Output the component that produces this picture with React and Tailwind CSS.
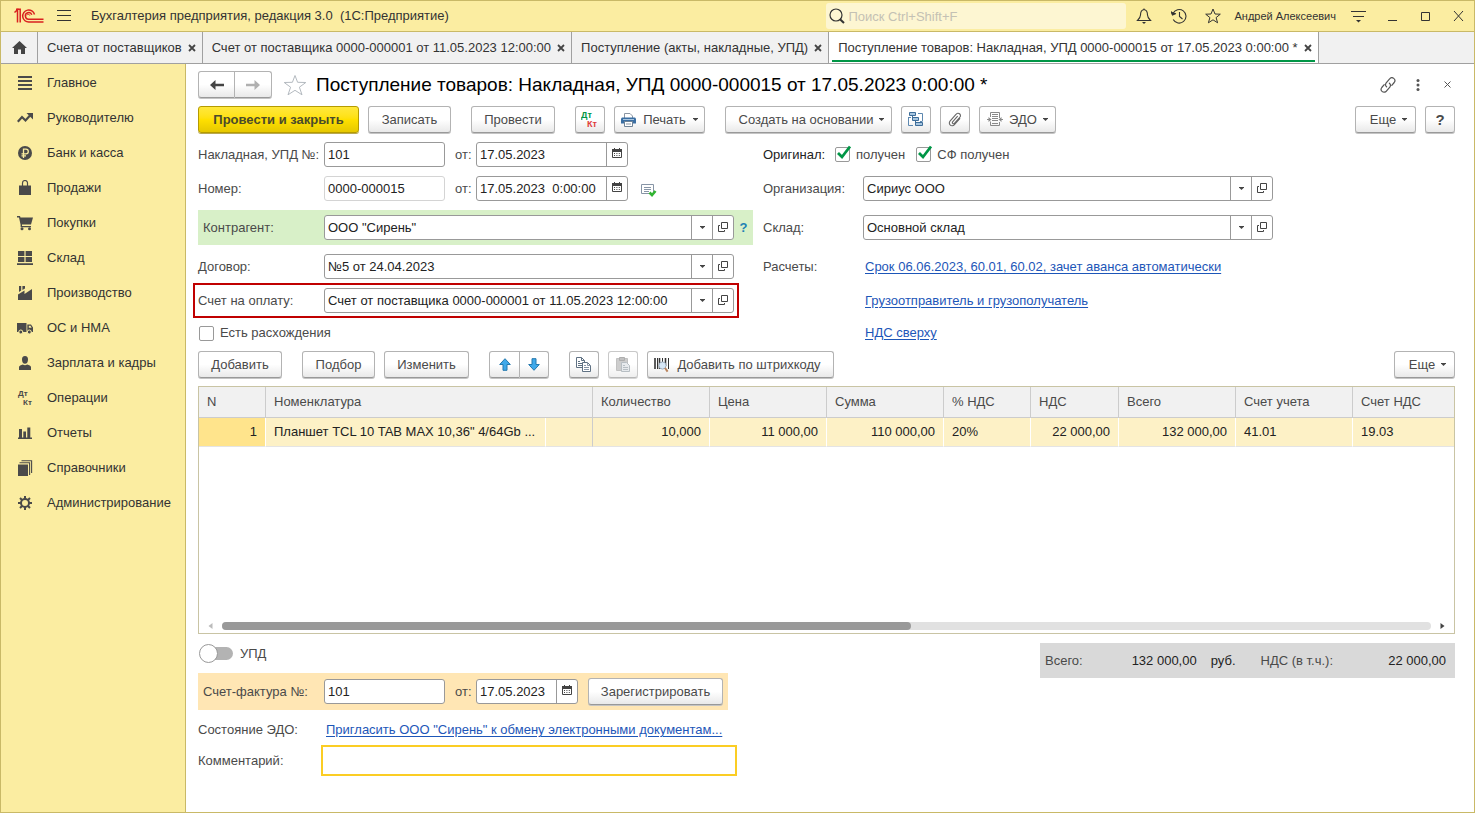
import React, { useState } from 'react';

const BTN =
  'flex h-[27px] shrink-0 items-center justify-center rounded-[3px] border border-[#b3b3b3] border-b-[#999] bg-linear-to-b from-white from-50% to-[#e9e9e9] text-[#4a4a4a] shadow-[0_1px_0_#c4c4c4]';

const LINK = 'text-[#1d56b8] underline underline-offset-2';

/* ---------- icons ---------- */

const Logo = () => (
  <svg width="30" height="16" viewBox="0 0 30 16" fill="none" stroke="#d9201f" strokeWidth="1.5">
    <path d="M0.5 4.5 L3.5 1.8 V14.5" />
    <path d="M2 1.2 H6.2 V14.5" />
    <path d="M20.5 6.5 A6 6 0 1 0 15.2 14 H29.5" />
    <path d="M17.8 6.8 A3.3 3.3 0 1 0 15.2 11.2 H29.5" />
    <path d="M13 7.2 A1.5 1.5 0 0 1 15.8 7.5" strokeWidth="1" />
  </svg>
);

const Caret = () => (
  <svg width="5" height="3" viewBox="0 0 5 3" className="shrink-0">
    <path d="M0 0 H5 V0.6 L2.5 3 L0 0.6 Z" fill="#444" />
  </svg>
);

const CalendarIcon = () => (
  <svg width="10" height="11" viewBox="0 0 10 11" className="mb-[2px]">
    <path d="M0.5 1.5 H9.5 V9.5 H0.5 Z" fill="#fff" stroke="#444" />
    <path d="M0 1 H10 V4 H0 Z" fill="#444" />
    <path d="M2.5 0 V2 M7.5 0 V2" stroke="#444" />
    <path d="M2 5.5 H8 M2 7.5 H8" stroke="#444" strokeDasharray="1 1.4" />
  </svg>
);

const OpenIcon = () => (
  <svg width="10" height="10" viewBox="0 0 10 10" fill="none" stroke="#444" className="mb-[2px]">
    <path d="M3.5 0.5 H9.5 V6.5 H3.5 Z" />
    <path d="M2 3.5 H0.5 V9.5 H6.5 V8" />
  </svg>
);

const TabClose = () => (
  <svg width="8" height="8" viewBox="0 0 8 8">
    <path d="M1 1 L7 7 M7 1 L1 7" stroke="#444" strokeWidth="1.8" />
  </svg>
);

const DtKt = ({ top, bottom }) => (
  <svg width="18" height="17" viewBox="0 0 18 17" fontFamily="'Liberation Sans', sans-serif" fontWeight="bold" fontSize="9">
    <text x="0" y="7" fill={top}>Дт</text>
    <text x="6" y="16" fill={bottom}>Кт</text>
  </svg>
);

const PrintIcon = () => (
  <svg width="15" height="14" viewBox="0 0 15 14">
    <path d="M3.5 5 V0.5 H9 L11.5 3 V5" fill="#fff" stroke="#8b96a3" />
    <path d="M1 4.5 H14 L15 5.5 V10.5 H0 V5.5 Z" fill="#3b6fa3" />
    <path d="M2 6.5 H13" stroke="#a9c6e0" />
    <path d="M3.5 8.5 H11.5 V13.5 H3.5 Z" fill="#fff" stroke="#6f8397" />
    <path d="M5 11 H10" stroke="#8b96a3" />
  </svg>
);

const StructureIcon = () => (
  <svg width="16" height="15" viewBox="0 0 16 15">
    <path d="M10 1.5 H14.5 V9 M0.5 5 V13.5 H5 M0.5 5.5 H3 M12 9.5 H14.5" fill="none" stroke="#5d88b0" />
    <g fill="#a8c6e0" stroke="#3d6d99">
      <path d="M1.5 0.5 H7.5 V3.5 H1.5 Z" />
      <path d="M4.5 5.5 H10.5 V8.5 H4.5 Z" />
      <path d="M7.5 10.5 H14.5 V13.5 H7.5 Z" />
    </g>
    <path d="M4.5 4 V7 M7.5 9 V12" stroke="#3d6d99" />
  </svg>
);

const ClipIcon = () => (
  <svg width="16" height="16" viewBox="0 0 16 16" fill="none" stroke="#666" strokeWidth="1.1" strokeLinecap="round">
    <path d="M12.8 6.6 L7.2 12.8 A2.7 2.7 0 0 1 3 9.2 L9.2 2.2 A2.3 2.3 0 0 1 13 5 L7.4 11.3 A1.1 1.1 0 0 1 5.6 9.8 L10.4 4.4" />
  </svg>
);

const EdoIcon = () => (
  <svg width="16" height="15" viewBox="0 0 16 15" fill="none" stroke="#8a8a8a">
    <path d="M3.5 5 V0.5 H12.5 V6 M3.5 9.5 V13.5 H12.5 V10" />
    <path d="M5 2.5 H11 M5 4.5 H11 M5 6.5 H11 M5 8.5 H11 M5 11.5 H11" />
    <path d="M0 7.5 H4 M12 7.5 H16" />
    <path d="M1.5 5 L4.5 7.5 L1.5 10 Z M14.5 5 L11.5 7.5 L14.5 10 Z" fill="#8a8a8a" stroke="none" />
  </svg>
);

const ListOkIcon = () => (
  <svg width="16" height="13" viewBox="0 0 16 13" fill="none">
    <path d="M0.5 0.5 H12.5 V9.5 H0.5 Z" stroke="#8795a6" fill="#fff" />
    <path d="M3 3.5 H10 M3 5.5 H10 M3 7.5 H8" stroke="#8795a6" />
    <path d="M8.5 8.5 L11 11 L14.5 7" stroke="#32b432" strokeWidth="2.6" />
  </svg>
);

const ArrowIcon = ({ down }) => (
  <svg width="12" height="13" viewBox="0 0 12 13" className={down ? 'rotate-180' : ''}>
    <path d="M6 0.7 L11.3 6.5 H8 V12.3 H4 V6.5 H0.7 Z" fill="#3fa9ea" stroke="#2478ad" strokeLinejoin="round" />
  </svg>
);

const CopyIcon = () => (
  <svg width="16" height="16" viewBox="0 0 16 16" fill="#fff" stroke="#5f7183">
    <path d="M0.5 0.5 H5.5 L8.5 3.5 V10.5 H0.5 Z" />
    <path d="M5.5 0.5 V3.5 H8.5 M2 4.5 H4 M2 6.5 H6 M2 8.5 H6" fill="none" />
    <path d="M6.5 5.5 H11.5 L14.5 8.5 V14.5 H6.5 Z" />
    <path d="M11.5 5.5 V8.5 H14.5 M8 8.5 H10 M8 10.5 H13 M8 12.5 H13" fill="none" stroke="#8795a6" />
  </svg>
);

const PasteIcon = () => (
  <svg width="15" height="16" viewBox="0 0 15 16">
    <path d="M0.5 1.5 H11.5 V13.5 H0.5 Z" fill="#b8b8b8" stroke="#a8a8a8" />
    <path d="M3.5 0.5 H8.5 V3.5 H3.5 Z" fill="#a8a8a8" stroke="#8c8c8c" />
    <path d="M5.5 5.5 H10.5 L13.5 8.5 V14.5 H5.5 Z" fill="#dde2e6" stroke="#9aa3ab" />
    <path d="M7 8.5 H9 M7 10.5 H12 M7 12.5 H12" stroke="#9aa3ab" />
  </svg>
);

const BarcodeIcon = () => (
  <svg width="16" height="16" viewBox="0 0 16 16">
    <path d="M1 1 V12 M5.5 1 V12 M11.5 1 V9" stroke="#333" strokeWidth="1.6" />
    <path d="M3.5 1 V12 M8.5 1 V5 M14.5 1 V12" stroke="#333" />
    <circle cx="8.5" cy="8.5" r="3.6" fill="#d6e6f5" stroke="#9aa9b8" />
    <path d="M11 11 L13.6 14.6" stroke="#b9825a" strokeWidth="2" />
  </svg>
);

const LinkIcon = () => (
  <svg width="16" height="16" viewBox="0 0 16 16" fill="none" stroke="#555" strokeWidth="1.2" strokeLinecap="round">
    <path d="M6.6 9.8 A3 3 0 0 1 6.2 5.8 L9.6 1.9 A2.9 2.9 0 0 1 14.2 5.5 L11.8 8.3" />
    <path d="M9.4 6.2 A3 3 0 0 1 9.8 10.2 L6.4 14.1 A2.9 2.9 0 0 1 1.8 10.5 L4.2 7.7" />
  </svg>
);

const MENU = [
  {
    title: 'Главное',
    icon: <path d="M1 1 H15 V3 H1 Z M1 5 H15 V7 H1 Z M1 9 H15 V11 H1 Z M1 13 H15 V15 H1 Z" />,
  },
  {
    title: 'Руководителю',
    icon: (
      <>
        <path d="M0.8 11.8 L5 7 L8.5 10.5 L13 5.5" fill="none" stroke="#4a4a4a" strokeWidth="2.2" />
        <path d="M9.5 3 H16 V9.5 Z" />
      </>
    ),
  },
  {
    title: 'Банк и касса',
    icon: (
      <>
        <circle cx="8" cy="8" r="7" />
        <path d="M6.5 13 V4.2 H9 A2.3 2.3 0 0 1 9 8.8 H4.5 M4.5 10.8 H9" fill="none" stroke="#fbeda1" strokeWidth="1.3" />
      </>
    ),
  },
  {
    title: 'Продажи',
    icon: (
      <>
        <path d="M2 5.5 H14 V15 H2 Z" />
        <path d="M5.5 7.5 V3 A2.5 2.5 0 0 1 10.5 3 V7.5" fill="none" stroke="#4a4a4a" strokeWidth="1.2" />
      </>
    ),
  },
  {
    title: 'Покупки',
    icon: (
      <>
        <path d="M0 1 H3 L3.5 2.5 H16 L14 9.5 H5 V11 H14 V12.2 H3.6 V9.8 L2 2.4 H0 Z" />
        <circle cx="5" cy="13.8" r="1.5" />
        <circle cx="12.5" cy="13.8" r="1.5" />
      </>
    ),
  },
  {
    title: 'Склад',
    icon: <path d="M1 1 H7.4 V6 H1 Z M8.6 1 H15 V6 H8.6 Z M1 7 H7.4 V12 H1 Z M8.6 7 H15 V12 H8.6 Z M0 13.2 H16 V15 H0 Z" />,
  },
  {
    title: 'Производство',
    icon: <path d="M1 15 V9.5 L7.5 5.5 V9 L15 4 V15 Z M2 1 H4.2 V5.6 L2 7 Z M5.4 1 H8 V3.6 L5.4 5 Z" />,
  },
  {
    title: 'ОС и НМА',
    icon: (
      <>
        <path d="M0 3 H9.5 V12 H0 Z M10.3 4.5 H14 L16 7.5 V12 H10.3 Z" />
        <path d="M11.8 5.8 H13.5 L14.6 7.8 H11.8 Z" fill="#fbeda1" />
        <circle cx="3.8" cy="12" r="2" stroke="#fbeda1" />
        <circle cx="12.3" cy="12" r="2" stroke="#fbeda1" />
      </>
    ),
  },
  {
    title: 'Зарплата и кадры',
    icon: <path d="M8 1 C10.2 1 11 2.4 11 4.4 C11 7 9.8 8.8 8 8.8 C6.2 8.8 5 7 5 4.4 C5 2.4 5.8 1 8 1 Z M2 15 V12 C2 10.6 4 9.8 5.8 9.4 Q8 11 10.2 9.4 C12 9.8 14 10.6 14 12 V15 Z" />,
  },
  {
    title: 'Операции',
    icon: (
      <g fontFamily="'Liberation Sans', sans-serif" fontWeight="bold" fontSize="8">
        <text x="1" y="6">Дт</text>
        <text x="6" y="15">Кт</text>
      </g>
    ),
  },
  {
    title: 'Отчеты',
    icon: <path d="M2 4 H5 V12.5 H2 Z M6.3 6.5 H9 V12.5 H6.3 Z M10.3 2.5 H13.3 V12.5 H10.3 Z M1 12.5 H15 V14 H1 Z" />,
  },
  {
    title: 'Справочники',
    icon: (
      <>
        <path d="M1 4.5 H11 V16 H1 Z" />
        <path d="M2.5 2.8 H12.6 V15 M4.5 0.8 H14.6 V13" fill="none" stroke="#4a4a4a" strokeWidth="1.1" />
      </>
    ),
  },
  {
    title: 'Администрирование',
    icon: (
      <>
        <circle cx="8" cy="8" r="4" fill="none" stroke="#4a4a4a" strokeWidth="2" />
        <path
          d="M8 1 V4 M8 12 V15 M1 8 H4 M12 8 H15 M3 3 L5 5 M11 11 L13 13 M3 13 L5 11 M11 5 L13 3"
          stroke="#4a4a4a"
          strokeWidth="2"
        />
      </>
    ),
  },
];

const TABS = [
  { title: 'Счета от поставщиков' },
  { title: 'Счет от поставщика 0000-000001 от 11.05.2023 12:00:00' },
  { title: 'Поступление (акты, накладные, УПД)' },
  { title: 'Поступление товаров: Накладная, УПД 0000-000015 от 17.05.2023 0:00:00 *', active: true },
];

/* ---------- controls ---------- */

const Button = ({ className = '', children, ...rest }) => (
  <button type="button" className={`${BTN} ${className}`} {...rest}>
    {children}
  </button>
);

const Field = ({ id, value, className = '', muted, children, ...rest }) => (
  <div
    className={`flex h-[25px] overflow-hidden rounded-[3px] border bg-white ${muted ? 'border-[#d4d4d4]' : 'border-[#999]'} ${className}`}
  >
    <input id={id} type="text" defaultValue={value} className="min-w-0 flex-1 px-[3px] text-[#222] outline-none" {...rest} />
    {children}
  </div>
);

const FieldButton = ({ label, children }) => (
  <button type="button" aria-label={label} className="flex w-[21px] shrink-0 items-center justify-center border-l border-[#999]">
    {children}
  </button>
);

const DateField = ({ id, value, className }) => (
  <Field id={id} value={value} className={className}>
    <FieldButton label="Выбрать дату">
      <CalendarIcon />
    </FieldButton>
  </Field>
);

const Combo = ({ id, value, className = '' }) => (
  <Field id={id} value={value} className={`min-w-0 flex-1 ${className}`}>
    <FieldButton label="Выбрать">
      <Caret />
    </FieldButton>
    <FieldButton label="Открыть">
      <OpenIcon />
    </FieldButton>
  </Field>
);

const Checkbox = ({ id, label, defaultChecked = false }) => {
  const [checked, setChecked] = useState(defaultChecked);
  return (
    <label htmlFor={id} className="flex items-center gap-[6px]">
      <span className="relative flex">
        <input
          id={id}
          type="checkbox"
          checked={checked}
          onChange={(e) => setChecked(e.target.checked)}
          className="size-[15px] appearance-none rounded-[2px] border border-[#999] bg-white"
        />
        {checked && (
          <svg width="16" height="16" viewBox="0 0 16 16" className="pointer-events-none absolute bottom-[2px] left-px">
            <path d="M2 9 L6 13 L14 2.5" fill="none" stroke="#009646" strokeWidth="2.8" />
          </svg>
        )}
      </span>
      {label}
    </label>
  );
};

const TitleBar = () => (
  <header className="flex h-[31px] shrink-0 items-center border-b border-[#c9b967] bg-[#fbeda1] pl-[13px] text-[#333]">
    <Logo />
    <button type="button" aria-label="Меню" className="ml-[13px]">
      <svg width="14" height="12" viewBox="0 0 14 12" stroke="#333">
        <path d="M0 0.5 H14 M0 5.5 H14 M0 10.5 H14" />
      </svg>
    </button>
    <h1 className="ml-5 flex-1 whitespace-pre">Бухгалтерия предприятия, редакция 3.0  (1С:Предприятие)</h1>
    <div className="relative flex w-[300px] items-center">
      <svg width="16" height="16" viewBox="0 0 16 16" className="absolute left-[3px]" fill="none" stroke="#333">
        <circle cx="7" cy="7" r="6" strokeWidth="1.2" />
        <path d="M11 11.2 L15 15" strokeWidth="2" />
      </svg>
      <input
        type="search"
        aria-label="Поиск"
        placeholder="Поиск Ctrl+Shift+F"
        className="h-[26px] w-full rounded-[3px] bg-[#fdf6d2] pl-[22px] placeholder:text-[#c4c1b4]"
      />
    </div>
    <div className="ml-[9px] flex items-center gap-[18px]">
      <button type="button" aria-label="Уведомления">
        <svg width="16" height="16" viewBox="0 0 16 16" fill="none" stroke="#333" className="mx-px">
          <path d="M8 1.5 C5 2 4.5 4.5 4.5 7 C4.5 9.5 3 11 1.5 12.5 H14.5 C13 11 11.5 9.5 11.5 7 C11.5 4.5 11 2 8 1.5 Z M8 0.5 V2" strokeWidth="1.1" />
          <path d="M6 14 H10 L8 16 Z" fill="#333" stroke="none" />
        </svg>
      </button>
      <button type="button" aria-label="История">
        <svg width="16" height="16" viewBox="0 0 16 16" fill="none" stroke="#333" strokeWidth="1.1">
          <path d="M2 5.5 A6.8 6.8 0 1 1 2.2 11.5 M8.5 4 V8.5 L11.5 11" />
          <path d="M0 3.5 L1.5 7 L5 5.5" fill="#333" />
        </svg>
      </button>
      <button type="button" aria-label="Избранное">
        <svg width="16" height="16" viewBox="0 0 16 16" fill="none" stroke="#333">
          <path d="M8 1 L10 6 L15.3 6.2 L11.1 9.6 L12.6 14.8 L8 11.8 L3.4 14.8 L4.9 9.6 L0.7 6.2 L6 6 Z" />
        </svg>
      </button>
    </div>
    <span className="ml-[13px] text-[11px]">Андрей Алексеевич</span>
    <div className="ml-[15px] mr-[9px] flex items-center gap-[20px]">
      <button type="button" aria-label="Настройки">
        <svg width="15" height="14" viewBox="0 0 15 14" stroke="#333">
          <path d="M0 2.5 H15 M2 7.5 H13" />
          <path d="M5 11 H10 L7.5 13.5 Z" fill="#333" stroke="none" />
        </svg>
      </button>
      <button type="button" aria-label="Свернуть">
        <svg width="13" height="12" viewBox="0 0 13 12" stroke="#333">
          <path d="M2 10.5 H11" />
        </svg>
      </button>
      <button type="button" aria-label="Развернуть">
        <svg width="13" height="12" viewBox="0 0 13 12" stroke="#333" fill="none">
          <path d="M2.5 2.5 H10.5 V10.5 H2.5 Z" />
        </svg>
      </button>
      <button type="button" aria-label="Закрыть">
        <svg width="13" height="12" viewBox="0 0 13 12" stroke="#333">
          <path d="M2 1 L11 11 M11 1 L2 11" />
        </svg>
      </button>
    </div>
  </header>
);

const TabBar = () => (
  <nav className="flex h-[32px] shrink-0 border-b border-[#a0a0a0] bg-[#f1f1f1] text-[#333]">
    <button type="button" aria-label="Начальная страница" className="flex w-[37px] items-center justify-center border-r border-[#a0a0a0]">
      <svg width="15" height="13" viewBox="0 0 15 13">
        <path d="M7.5 0 L15 7 H13 V13 H9 V8.5 H6 V13 H2 V7 H0 Z" fill="#444" />
      </svg>
    </button>
    {TABS.map((tab) => (
      <div
        key={tab.title}
        className={`relative flex items-center gap-[6px] border-r border-[#a0a0a0] pl-[9px] pr-[6px] ${tab.active ? 'bg-white' : ''}`}
      >
        <a href="#" className="whitespace-nowrap">{tab.title}</a>
        <button type="button" aria-label="Закрыть вкладку">
          <TabClose />
        </button>
        {tab.active && <span className="absolute inset-x-[3px] bottom-px h-[2px] bg-[#009646]" />}
      </div>
    ))}
  </nav>
);

const SideBar = () => (
  <aside className="w-[185px] shrink-0 border-r border-[#c9b967] bg-[#fbeda1] pt-px text-[#333]">
    {MENU.map((item) => (
      <a key={item.title} href="#" className="flex h-[35px] items-center gap-[14px] pl-4">
        <svg width="16" height="16" viewBox="0 0 16 16" fill="#4a4a4a" className="shrink-0">
          {item.icon}
        </svg>
        {item.title}
      </a>
    ))}
  </aside>
);

const Toolbar = () => (
  <div className="flex gap-5">
    <div className="flex gap-[9px]">
      <button
        type="button"
        className="h-[27px] w-[161px] rounded-[3px] border border-[#b59b00] bg-linear-to-b from-[#ffe83a] via-[#ffe000] to-[#e6c800] font-bold text-[#4a4a2c] shadow-[0_1px_0_#b8a850]"
      >
        Провести и закрыть
      </button>
      <Button className="w-[83px]">Записать</Button>
    </div>
    <Button className="w-[84px]">Провести</Button>
    <div className="flex gap-[9px]">
      <Button className="w-[30px]" aria-label="Показать проводки">
        <DtKt top="#009646" bottom="#e03b3b" />
      </Button>
      <Button className="w-[91px] gap-[7px]">
        <PrintIcon />
        Печать
        <Caret />
      </Button>
    </div>
    <div className="flex flex-1 gap-[9px]">
      <Button className="w-[167px] gap-[6px] pl-[6px]">
        Создать на основании
        <Caret />
      </Button>
      <Button className="w-[30px]" aria-label="Структура подчиненности">
        <StructureIcon />
      </Button>
      <Button className="w-[30px]" aria-label="Файлы">
        <ClipIcon />
      </Button>
      <Button className="w-[77px] gap-[6px]">
        <EdoIcon />
        ЭДО
        <Caret />
      </Button>
      <Button className="ml-auto w-[61px] gap-[6px] pl-[6px]">
        Еще
        <Caret />
      </Button>
      <Button className="w-[30px] text-[15px] font-bold" aria-label="Справка">?</Button>
    </div>
  </div>
);

const Header = () => (
  <div className="flex gap-[10px]">
    <div className="flex w-[555px] shrink-0 flex-col gap-[9px]">
      <div className="flex items-center">
        <label htmlFor="doc-number" className="w-[126px]">Накладная, УПД №:</label>
        <Field id="doc-number" value="101" className="w-[121px]" />
        <label htmlFor="doc-date" className="w-[31px] pl-[10px]">от:</label>
        <DateField id="doc-date" value="17.05.2023" className="w-[152px]" />
      </div>
      <div className="flex items-center">
        <label htmlFor="number" className="w-[126px]">Номер:</label>
        <Field id="number" value="0000-000015" muted readOnly className="w-[121px]" />
        <label htmlFor="date" className="w-[31px] pl-[10px]">от:</label>
        <DateField id="date" value="17.05.2023  0:00:00" className="w-[152px]" />
        <span className="ml-[13px] mt-1">
          <ListOkIcon />
        </span>
      </div>
      <div className="flex h-[35px] items-center bg-[#d8f0c8] pl-[5px]">
        <label htmlFor="partner" className="w-[121px]">Контрагент:</label>
        <Combo id="partner" value={'ООО "Сирень"'} />
        <button type="button" aria-label="Подсказка" className="w-[19px] font-bold text-[#1e82b4]">?</button>
      </div>
      <div className="flex items-center pr-[19px]">
        <label htmlFor="contract" className="w-[126px]">Договор:</label>
        <Combo id="contract" value="№5 от 24.04.2023" />
      </div>
      <div className="-my-[5px] -ml-[5px] mr-[14px] flex items-center border-2 border-[#c00000] px-[3px] py-[3px]">
        <label htmlFor="invoice" className="w-[126px]">Счет на оплату:</label>
        <Combo id="invoice" value="Счет от поставщика 0000-000001 от 11.05.2023 12:00:00" />
      </div>
      <div className="flex h-[22px] items-center pl-px">
        <Checkbox id="diff" label="Есть расхождения" />
      </div>
    </div>

    <div className="flex max-w-[510px] flex-1 flex-col gap-[9px]">
      <div className="flex h-[25px] items-center gap-[11px]">
        <span className="w-[61px] text-[#222]">Оригинал:</span>
        <Checkbox id="received" label="получен" defaultChecked />
        <Checkbox id="sf-received" label="СФ получен" defaultChecked />
      </div>
      <div className="flex items-center">
        <label htmlFor="org" className="w-[100px]">Организация:</label>
        <Combo id="org" value="Сириус ООО" />
      </div>
      <div className="flex h-[35px] items-center">
        <label htmlFor="store" className="w-[100px]">Склад:</label>
        <Combo id="store" value="Основной склад" />
      </div>
      <div className="flex h-[25px] items-center">
        <span className="w-[102px]">Расчеты:</span>
        <a href="#" className={LINK}>Срок 06.06.2023, 60.01, 60.02, зачет аванса автоматически</a>
      </div>
      <div className="flex h-[25px] items-center pl-[102px]">
        <a href="#" className={LINK}>Грузоотправитель и грузополучатель</a>
      </div>
      <div className="flex h-[22px] items-center pl-[102px]">
        <a href="#" className={LINK}>НДС сверху</a>
      </div>
    </div>
  </div>
);

const TableToolbar = () => (
  <div className="mt-[7px] flex gap-5">
    <Button className="w-[84px]">Добавить</Button>
    <div className="flex gap-[9px]">
      <Button className="w-[73px]">Подбор</Button>
      <Button className="w-[85px]">Изменить</Button>
    </div>
    <div className="flex">
      <Button className="w-[31px] rounded-r-none" aria-label="Переместить вверх">
        <ArrowIcon />
      </Button>
      <Button className="w-[29px] rounded-l-none border-l-0" aria-label="Переместить вниз">
        <ArrowIcon down />
      </Button>
    </div>
    <div className="flex flex-1 gap-[9px]">
      <Button className="w-[30px]" aria-label="Копировать строки">
        <CopyIcon />
      </Button>
      <Button className="w-[30px] opacity-70" aria-label="Вставить строки">
        <PasteIcon />
      </Button>
      <Button className="w-[187px] gap-[7px] pr-[6px]">
        <BarcodeIcon />
        Добавить по штрихкоду
      </Button>
      <Button className="ml-auto w-[61px] gap-[6px] pl-[6px]">
        Еще
        <Caret />
      </Button>
    </div>
  </div>
);

const COLUMNS = [
  { title: 'N', value: '1', right: true },
  { title: 'Номенклатура', value: 'Планшет TCL 10 TAB MAX 10,36" 4/64Gb ...', span: 2 },
  { title: 'Количество', value: '10,000', right: true },
  { title: 'Цена', value: '11 000,00', right: true },
  { title: 'Сумма', value: '110 000,00', right: true },
  { title: '% НДС', value: '20%' },
  { title: 'НДС', value: '22 000,00', right: true },
  { title: 'Всего', value: '132 000,00', right: true },
  { title: 'Счет учета', value: '41.01' },
  { title: 'Счет НДС', value: '19.03' },
];

const GoodsTable = () => (
  <div className="mt-2 flex flex-1 flex-col border border-[#c9c4a4]">
    <table className="w-full table-fixed border-separate border-spacing-0">
      <colgroup>
        <col className="w-[67px]" />
        <col className="w-[280px]" />
        <col className="w-[47px]" />
        <col className="w-[117px]" />
        <col className="w-[117px]" />
        <col className="w-[117px]" />
        <col className="w-[87px]" />
        <col className="w-[88px]" />
        <col className="w-[117px]" />
        <col className="w-[117px]" />
        <col />
      </colgroup>
      <thead>
        <tr className="h-[31px] bg-[#f1f1f1]">
          {COLUMNS.map((col) => (
            <th key={col.title} colSpan={col.span} className="border-b border-r border-[#ccc] px-2 text-left font-normal last:border-r-0">
              {col.title}
            </th>
          ))}
        </tr>
      </thead>
      <tbody>
        <tr className="h-[29px] bg-[#fdf1c6] text-[#222]">
          {COLUMNS.map((col) => (
            <React.Fragment key={col.title}>
              <td
                className={`whitespace-nowrap border-b border-r border-b-[#e4e4e4] border-r-white px-2 last:border-r-0 ${col.right ? 'text-right' : ''} ${col.title === 'N' ? 'bg-[#ffe48c]' : ''}`}
              >
                {col.value}
              </td>
              {col.span && <td className="border-b border-r border-b-[#e4e4e4] border-r-[#ccc]" />}
            </React.Fragment>
          ))}
        </tr>
      </tbody>
    </table>
    <div className="mb-[3px] mt-auto flex items-center gap-[9px] px-[9px]">
      <svg width="5" height="6" viewBox="0 0 5 6">
        <path d="M4.5 0 V6 L0.5 3 Z" fill="#bbb" />
      </svg>
      <div className="h-2 flex-1 rounded-full bg-[#e1e1e1]">
        <div className="h-2 w-[57%] rounded-full bg-[#999]" />
      </div>
      <svg width="5" height="6" viewBox="0 0 5 6">
        <path d="M0.5 0 V6 L4.5 3 Z" fill="#444" />
      </svg>
    </div>
  </div>
);

const Footer = () => {
  const [upd, setUpd] = useState(false);
  return (
    <div className="mt-[9px] flex items-start justify-between">
      <div className="flex w-[539px] shrink-0 flex-col">
        <label htmlFor="upd" className="flex h-[21px] items-center gap-[7px] pl-px">
          <span className="relative flex h-[19px] w-[34px] items-center">
            <input
              id="upd"
              type="checkbox"
              role="switch"
              checked={upd}
              onChange={(e) => setUpd(e.target.checked)}
              className="ml-1 h-[13px] w-[30px] appearance-none rounded-full bg-[#b3b3b3]"
            />
            <span
              className={`pointer-events-none absolute size-[19px] rounded-full border border-[#999] bg-white ${upd ? 'right-0' : 'left-0'}`}
            />
          </span>
          УПД
        </label>
        <div className="mr-[9px] mt-[9px] flex h-[37px] items-center bg-[#ffe6b4] pl-[5px]">
          <label htmlFor="sf-number" className="w-[121px]">Счет-фактура №:</label>
          <Field id="sf-number" value="101" className="w-[121px]" />
          <label htmlFor="sf-date" className="w-[31px] pl-[10px]">от:</label>
          <DateField id="sf-date" value="17.05.2023" className="w-[102px]" />
          <Button className="ml-[10px] w-[135px]">Зарегистрировать</Button>
        </div>
        <div className="mt-[10px] flex h-5 items-center">
          <span className="w-[128px]">Состояние ЭДО:</span>
          <a href="#" className={LINK}>Пригласить ООО "Сирень" к обмену электронными документам...</a>
        </div>
        <div className="mt-[5px] flex items-center">
          <label htmlFor="comment" className="w-[123px]">Комментарий:</label>
          <input id="comment" type="text" className="h-[31px] flex-1 border-2 border-[#fbcd24] px-1 outline-none" />
        </div>
      </div>
      <div className="flex h-[35px] w-[415px] items-center bg-[#d9d9d9] pl-[5px] pr-[9px]">
        <span>Всего:</span>
        <span className="flex-1 text-right text-[#222]">132 000,00</span>
        <span className="ml-[14px] text-[#222]">руб.</span>
        <span className="ml-[25px]">НДС (в т.ч.):</span>
        <span className="w-[113px] text-right text-[#222]">22 000,00</span>
      </div>
    </div>
  );
};

const App = () => {
  return (
    <div className="flex min-h-screen flex-col border border-[#c9b967] bg-white font-['Liberation_Sans',Arial,sans-serif] text-[13px] leading-[16px] text-[#4a4a4a]">
      <TitleBar />
      <TabBar />
      <div className="flex flex-1">
        <SideBar />
        <main className="flex min-w-0 flex-1 flex-col pb-[36px] pl-3 pr-[19px] pt-2">
          <div className="mb-[9px] flex h-[25px] items-center">
            <div className="flex">
              <Button className="h-[25px] w-[37px] rounded-r-none" aria-label="Назад">
                <svg width="14" height="10" viewBox="0 0 14 10">
                  <path d="M0 5 L5.5 0 V3.7 H14 V6.3 H5.5 V10 Z" fill="#444" />
                </svg>
              </Button>
              <Button className="h-[25px] w-[37px] rounded-l-none border-l-0" aria-label="Вперед">
                <svg width="14" height="10" viewBox="0 0 14 10">
                  <path d="M14 5 L8.5 0 V3.7 H0 V6.3 H8.5 V10 Z" fill="#b0b0b0" />
                </svg>
              </Button>
            </div>
            <button type="button" aria-label="В избранное" className="ml-[11px]">
              <svg width="24" height="22" viewBox="0 0 24 22" fill="#fff" stroke="#b4bac0">
                <path d="M12 1.5 L14.6 8.3 L22.8 8.5 L16.4 13.2 L19 20.8 L12 16.3 L5 20.8 L7.6 13.2 L1.2 8.5 L9.4 8.3 Z" />
              </svg>
            </button>
            <h2 className="ml-[9px] flex-1 text-[19px] leading-[24px] text-black">
              Поступление товаров: Накладная, УПД 0000-000015 от 17.05.2023 0:00:00 *
            </h2>
            <div className="flex items-center gap-5 pr-1">
              <button type="button" aria-label="Получить ссылку">
                <LinkIcon />
              </button>
              <button type="button" aria-label="Дополнительно">
                <svg width="4" height="12" viewBox="0 0 4 12" fill="#555">
                  <circle cx="2" cy="1.6" r="1.5" />
                  <circle cx="2" cy="6" r="1.5" />
                  <circle cx="2" cy="10.4" r="1.5" />
                </svg>
              </button>
              <button type="button" aria-label="Закрыть" className="pl-1">
                <svg width="7" height="7" viewBox="0 0 7 7" stroke="#555">
                  <path d="M0.5 0.5 L6.5 6.5 M6.5 0.5 L0.5 6.5" />
                </svg>
              </button>
            </div>
          </div>
          <Toolbar />
          <div className="mt-[9px]">
            <Header />
          </div>
          <TableToolbar />
          <GoodsTable />
          <Footer />
        </main>
      </div>
    </div>
  );
};

export default App;
